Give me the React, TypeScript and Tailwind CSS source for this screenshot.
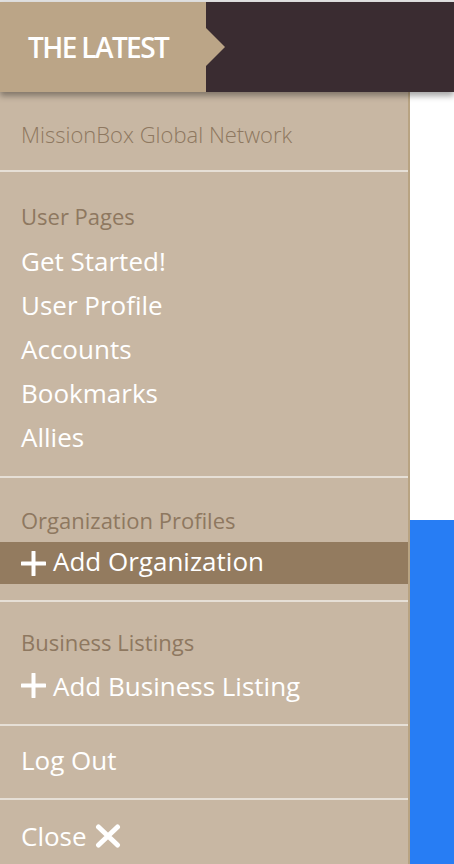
import React from "react";

const font = { fontFamily: '"Open Sans", "Liberation Sans", sans-serif' };

function PlusIcon() {
  return (
    <svg width="25" height="25" viewBox="0 0 25 25" className="shrink-0">
      <path d="M12.5 1v23M1 12.5h23" stroke="white" strokeWidth="4" strokeLinecap="round" />
    </svg>
  );
}

function CloseIcon() {
  return (
    <svg width="26" height="24" viewBox="0 0 26 24" className="shrink-0">
      <path d="M3.5 3l19 18M22.5 3l-19 18" stroke="white" strokeWidth="5" strokeLinecap="round" />
    </svg>
  );
}

const Divider = () => <div className="h-[2px] bg-[#e6dfd6]" />;

const Label = ({ children }: { children: React.ReactNode }) => (
  <div className="h-[44px] leading-[44px] text-[22px] text-[#8e7860] px-[21px]">{children}</div>
);

const Item = ({ children }: { children: React.ReactNode }) => (
  <a className="block h-[44px] leading-[44px] text-[26px] text-white px-[21px]">{children}</a>
);

export default function App() {
  const userPages = ["Get Started!", "User Profile", "Accounts", "Bookmarks", "Allies"];

  return (
    <div className="w-[454px] h-[864px] overflow-hidden bg-white flex flex-col" style={font}>
      <div className="h-[2px] bg-[#e2e2e2]" />
      <header className="relative z-10 h-[90px] flex bg-[#3a2c31] shadow-[0_4px_6px_rgba(0,0,0,0.35)]">
        <div className="relative w-[206px] bg-[#bba587] flex items-center pl-[28px]">
          <span className="text-[28px] font-semibold text-white tracking-[-1.6px] leading-none">THE LATEST</span>
          <span className="absolute left-full top-[26px] border-y-[19px] border-y-transparent border-l-[19px] border-l-[#bba587]" />
        </div>
      </header>

      <div className="flex flex-1">
        <nav className="w-[410px] bg-[#c8b7a3] border-r-2 border-[#b8a382] flex flex-col">
          <div className="h-[78px] pt-[28px]">
            <div className="leading-[28px] text-[22px] font-light text-[#8e7860] px-[21px]">MissionBox Global Network</div>
          </div>
          <Divider />

          <div className="pt-[22px] pb-[16px]">
            <Label>User Pages</Label>
            <div className="mt-[1px] mb-[1px]">
              {userPages.map((p) => (
                <Item key={p}>{p}</Item>
              ))}
            </div>
          </div>
          <Divider />

          <div className="pt-[20px] pb-[16px]">
            <Label>Organization Profiles</Label>
            <a className="h-[42px] bg-[#937b5f] flex items-center gap-[7px] px-[21px] text-[26px] text-white">
              <PlusIcon />
              <span className="pb-[4px]">Add Organization</span>
            </a>
          </div>
          <Divider />

          <div className="pt-[18px] pb-[18px]">
            <Label>Business Listings</Label>
            <a className="h-[42px] flex items-center gap-[7px] px-[21px] text-[26px] text-white">
              <PlusIcon />
              <span className="pt-[2px]">Add Business Listing</span>
            </a>
          </div>
          <Divider />

          <div className="h-[72px] flex items-center pb-[4px]">
            <Item>Log Out</Item>
          </div>
          <Divider />

          <div className="pt-[14px]">
            <a className="h-[44px] flex items-center gap-[8px] px-[21px] text-[26px] text-white">
              <span>Close</span>
              <CloseIcon />
            </a>
          </div>
        </nav>

        <div className="flex-1 flex flex-col">
          <div className="h-[428px] bg-white" />
          <div className="flex-1 bg-[#277df4]" />
        </div>
      </div>
    </div>
  );
}
